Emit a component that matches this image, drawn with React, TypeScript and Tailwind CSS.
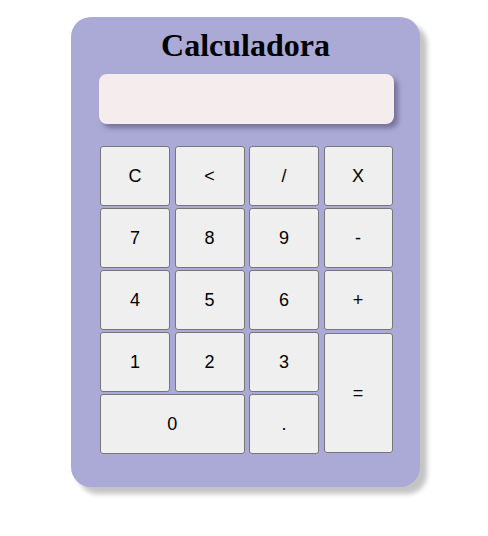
import React from "react";

const btn =
  "flex items-center justify-center bg-[#efefef] border border-[#767676] rounded-[3px] text-[18px] text-black font-['Liberation_Sans',Arial,sans-serif]";

export default function App() {
  const keys: { label: string; cls?: string }[] = [
    { label: "C" },
    { label: "<" },
    { label: "/" },
    { label: "X" },
    { label: "7" },
    { label: "8" },
    { label: "9" },
    { label: "-" },
    { label: "4" },
    { label: "5" },
    { label: "6" },
    { label: "+" },
    { label: "1" },
    { label: "2" },
    { label: "3" },
    { label: "=", cls: "row-span-2 mt-[1px] mb-[1px]" },
    { label: "0", cls: "col-span-2" },
    { label: "." },
  ];
  return (
    <div className="w-[488px] h-[536px] bg-white pt-[17px]">
      <div className="ml-[71px] w-[349px] h-[470px] bg-[#aba9d5] rounded-[20px] shadow-[7px_7px_5px_#c4c4c4] pt-[10px] flex flex-col">
        <h1 className="text-center text-[32px] font-bold leading-[36px] text-black font-['Liberation_Serif','Times_New_Roman',serif]">
          Calculadora
        </h1>
        <div className="ml-[28px] mt-[11px] w-[295px] h-[50px] bg-[#f5ecee] rounded-[8px] shadow-[4px_4px_5px_#75739a]" />
        <div className="ml-[29px] mt-[22px] grid grid-cols-[70px_70px_70px_69px] auto-rows-[60px] gap-x-[4.5px] gap-y-[2px]">
          {keys.map((k, i) => (
            <button key={i} className={`${btn} ${k.cls ?? ""}`}>
              {k.label}
            </button>
          ))}
        </div>
      </div>
    </div>
  );
}
